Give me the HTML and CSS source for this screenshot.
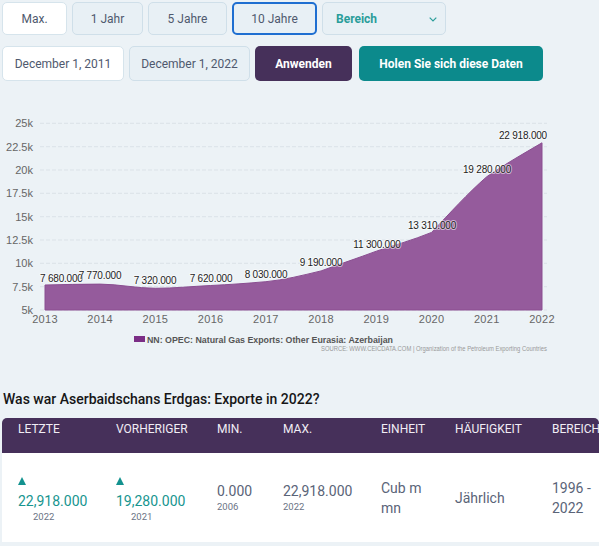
FILE: index.html
```html
<!DOCTYPE html>
<html lang="de">
<head>
<meta charset="utf-8">
<title>Aserbaidschan Erdgas: Exporte</title>
<link rel="stylesheet" href="styles.css">
</head>
<body>
<div class="controls">
  <div class="row row-range">
    <button class="btn btn-white w-max">Max.</button>
    <button class="btn w-1">1 Jahr</button>
    <button class="btn w-5">5 Jahre</button>
    <button class="btn btn-active w-10">10 Jahre</button>
    <div class="select">
      <span>Bereich</span>
      <svg class="chev" width="8" height="5" viewBox="0 0 8 5"><path d="M0.7 0.7 L4 4 L7.3 0.7" fill="none" stroke="#2a9d9a" stroke-width="1.2"/></svg>
    </div>
  </div>
  <div class="row row-dates">
    <div class="btn btn-white w-d1">December 1, 2011</div>
    <div class="btn w-d2">December 1, 2022</div>
    <button class="btn-apply">Anwenden</button>
    <button class="btn-get">Holen Sie sich diese Daten</button>
  </div>
</div>

<svg class="chart" width="599" height="276" viewBox="0 84 599 276">
  <g class="grid">
    <line x1="40" y1="123.3" x2="547" y2="123.3"/>
    <line x1="40" y1="146.7" x2="547" y2="146.7"/>
    <line x1="40" y1="170" x2="547" y2="170"/>
    <line x1="40" y1="193.3" x2="547" y2="193.3"/>
    <line x1="40" y1="216.7" x2="547" y2="216.7"/>
    <line x1="40" y1="240" x2="547" y2="240"/>
    <line x1="40" y1="263.3" x2="547" y2="263.3"/>
    <line x1="40" y1="286.7" x2="547" y2="286.7"/>
    <line x1="40" y1="310" x2="547" y2="310"/>
  </g>
  <g class="ylab">
    <text x="33" y="127.3">25k</text>
    <text x="33" y="150.7">22.5k</text>
    <text x="33" y="174">20k</text>
    <text x="33" y="197.3">17.5k</text>
    <text x="33" y="220.7">15k</text>
    <text x="33" y="244">12.5k</text>
    <text x="33" y="267.3">10k</text>
    <text x="33" y="290.7">7.5k</text>
    <text x="33" y="314">5k</text>
  </g>
  <path class="area" d="M45 310 L45 285 C63 284.7 82 284 100.2 284.1 C119 284.3 137 288.3 155.4 288.3 C174 288.3 192 286.4 210.7 285.5 C229 284.6 247 283.4 265.9 281.7 C284 280 302 275.5 321.1 270.9 C340 264 358 258 376.3 251.2 C395 245 413 240 431.6 232.4 C450 213 468 193 486.8 176.7 C505 164 523 154 542 142.8 L542 310 Z"/>
  <g class="xlab">
    <text x="45" y="323">2013</text>
    <text x="100.2" y="323">2014</text>
    <text x="155.4" y="323">2015</text>
    <text x="210.7" y="323">2016</text>
    <text x="265.9" y="323">2017</text>
    <text x="321.1" y="323">2018</text>
    <text x="376.3" y="323">2019</text>
    <text x="431.6" y="323">2020</text>
    <text x="486.8" y="323">2021</text>
    <text x="542" y="323">2022</text>
  </g>
  <g class="dlab">
    <text class="lab-start" x="40" y="281.8">7 680.000</text>
    <text x="100" y="279.2">7 770.000</text>
    <text x="155" y="284.2">7 320.000</text>
    <text x="211" y="281.8">7 620.000</text>
    <text x="266" y="277.5">8 030.000</text>
    <text x="321" y="266.2">9 190.000</text>
    <text x="377" y="247.5">11 300.000</text>
    <text x="432" y="228.5">13 310.000</text>
    <text x="487" y="172.8">19 280.000</text>
    <text class="lab-end" x="547" y="139.2">22 918.000</text>
  </g>
  <rect x="134" y="336" width="11" height="6" fill="#7b2e86"/>
  <text class="legend" x="147" y="342.5" textLength="246" lengthAdjust="spacingAndGlyphs">NN: OPEC: Natural Gas Exports: Other Eurasia: Azerbaijan</text>
  <text class="source" x="321" y="350.8" textLength="226" lengthAdjust="spacingAndGlyphs">SOURCE: WWW.CEICDATA.COM | Organization of the Petroleum Exporting Countries</text>
</svg>

<h2 class="title">Was war Aserbaidschans Erdgas: Exporte in 2022?</h2>

<div class="table">
  <div class="thead">
    <div class="th">LETZTE</div>
    <div class="th">VORHERIGER</div>
    <div class="th">MIN.</div>
    <div class="th">MAX.</div>
    <div class="th">EINHEIT</div>
    <div class="th">HÄUFIGKEIT</div>
    <div class="th">BEREICH</div>
  </div>
  <div class="tbody">
    <div class="td td-up">
      <span class="tri"></span>
      <div class="val teal">22,918.000</div>
      <div class="yr yr-in">2022</div>
    </div>
    <div class="td td-up">
      <span class="tri"></span>
      <div class="val teal">19,280.000</div>
      <div class="yr yr-in">2021</div>
    </div>
    <div class="td">
      <div class="val">0.000</div>
      <div class="yr">2006</div>
    </div>
    <div class="td">
      <div class="val">22,918.000</div>
      <div class="yr">2022</div>
    </div>
    <div class="td text">Cub m mn</div>
    <div class="td text">Jährlich</div>
    <div class="td text narrow">1996 - 2022</div>
  </div>
</div>
</body>
</html>
```

FILE: styles.css
```css
* { box-sizing: border-box; }

body {
  margin: 0;
  width: 599px;
  height: 546px;
  overflow: hidden;
  background: #ecf2f6;
  font-family: Roboto, "Liberation Sans", sans-serif;
}

.controls {
  padding: 2px 0 0 2px;
}

.row {
  display: flex;
  gap: 5px;
}

.row-range { height: 33px; }
.row-dates { height: 35px; margin-top: 11px; }

.btn {
  display: flex;
  align-items: center;
  justify-content: center;
  height: 100%;
  border: 1px solid #cfdfe9;
  border-radius: 5px;
  background: #e8f0f5;
  color: #4f596e;
  font: 12px Roboto, "Liberation Sans", sans-serif;
  padding: 0;
}

.btn-white { background: #ffffff; border-color: #d6e4ec; }
.btn-active { border: 2px solid #1f6fd1; }

.w-max { width: 65px; }
.w-1 { width: 71px; }
.w-5 { width: 79px; }
.w-10 { width: 85px; }
.w-d1 { width: 122px; }
.w-d2 { width: 121px; }

.select {
  width: 124px;
  height: 100%;
  display: flex;
  align-items: center;
  justify-content: space-between;
  padding: 0 8px 0 13px;
  border: 1px solid #cfdfe9;
  border-radius: 5px;
  background: #e8f0f5;
  color: #2a9d9a;
  font-size: 12px;
  font-weight: 700;
}

.chev { display: block; margin-top: 1px; }

.btn-apply,
.btn-get {
  height: 100%;
  border: 0;
  border-radius: 5px;
  color: #ffffff;
  font: 700 12px Roboto, "Liberation Sans", sans-serif;
  padding: 0;
}

.btn-apply { width: 97px; background: #46305a; }
.btn-get { width: 184px; margin-left: 2px; background: #0c8a8c; }

.chart {
  display: block;
  margin-top: 3px;
}

.grid line {
  stroke: #dbe2e8;
  stroke-width: 1;
  stroke-dasharray: 4 2;
}

.ylab text {
  font: 11px "Liberation Sans", Arial, sans-serif;
  fill: #666666;
  text-anchor: end;
}

.xlab text {
  font: 11px "Liberation Sans", Arial, sans-serif;
  fill: #666666;
  text-anchor: middle;
  letter-spacing: 0.3px;
}

.area {
  fill: #955b9c;
  stroke: #8a4e91;
  stroke-width: 1;
}

.dlab text {
  font: 10px "Liberation Sans", Arial, sans-serif;
  letter-spacing: -0.2px;
  fill: #1e1e1e;
  text-anchor: middle;
  stroke: rgba(255, 255, 255, 0.55);
  stroke-width: 2px;
  paint-order: stroke;
  stroke-linejoin: round;
}

.dlab .lab-start { text-anchor: start; }
.dlab .lab-end { text-anchor: end; }

.legend {
  font: 700 9px "Liberation Sans", Arial, sans-serif;
  fill: #555555;
}

.source {
  font: 6.5px "Liberation Sans", Arial, sans-serif;
  fill: #999999;
}

.title {
  margin: 29px 0 9px 3px;
  font: 500 14px/20px Roboto, "Liberation Sans", sans-serif;
  color: #161616;
}

.table {
  margin-left: 2px;
  width: 597px;
  border-radius: 5px 5px 0 0;
  overflow: hidden;
}

.thead,
.tbody {
  display: grid;
  grid-template-columns: 98px 101px 66px 98px 74px 97px 120px;
}

.thead {
  height: 35px;
  background: #46305a;
  padding-top: 4px;
}

.th {
  padding-left: 16px;
  font: 12px/14px Roboto, "Liberation Sans", sans-serif;
  color: #f1edf5;
  white-space: nowrap;
}

.tbody {
  height: 89px;
  background: #ffffff;
  align-items: center;
  color: #5a6478;
}

.td {
  padding-left: 16px;
}

.td-up { margin-top: 6px; }

.tri {
  display: block;
  width: 0;
  height: 0;
  border-left: 4px solid transparent;
  border-right: 4px solid transparent;
  border-bottom: 8px solid #13928f;
  margin-bottom: 7px;
}

.val {
  font-size: 14px;
  line-height: 18px;
}

.teal { color: #17958f; }

.yr {
  font-size: 9.5px;
  line-height: 14px;
  color: #6b7385;
}

.yr-in { padding-left: 15px; }

.text {
  font-size: 14px;
  line-height: 20px;
  padding-right: 8px;
}

.narrow { width: 70px; }
```
